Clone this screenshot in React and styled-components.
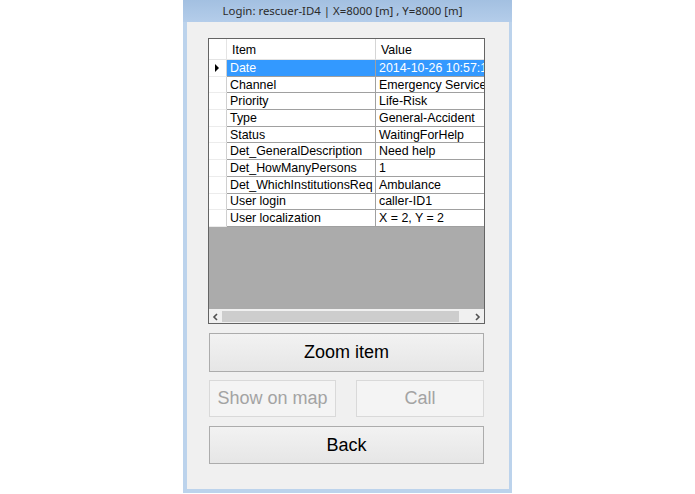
import React from 'react';
import styled, { createGlobalStyle } from 'styled-components';

const GlobalStyle = createGlobalStyle`
  html, body {
    margin: 0;
    padding: 0;
    background: #ffffff;
  }
`;

const rows = [
  ['Date', '2014-10-26 10:57:19'],
  ['Channel', 'Emergency Services'],
  ['Priority', 'Life-Risk'],
  ['Type', 'General-Accident'],
  ['Status', 'WaitingForHelp'],
  ['Det_GeneralDescription', 'Need help'],
  ['Det_HowManyPersons', '1'],
  ['Det_WhichInstitutionsReq', 'Ambulance'],
  ['User login', 'caller-ID1'],
  ['User localization', 'X = 2, Y = 2'],
];

const Page = styled.div`
  width: 695px;
  height: 494px;
  display: flex;
  padding-left: 183px;
  box-sizing: border-box;
`;

const Window = styled.div`
  width: 329px;
  height: 493px;
  display: flex;
  flex-direction: column;
  background: #bcd3ec;
  box-sizing: border-box;
  padding: 0 3px 4px 4px;
`;

const TitleBar = styled.div`
  height: 22px;
  margin: 0 -3px 0 -4px;
  display: flex;
  align-items: center;
  justify-content: center;
  background: linear-gradient(180deg, #a3c0e1 0%, #b4cdea 100%);
  font-family: 'Noto Sans', 'Liberation Sans', sans-serif;
  font-size: 11.4px;
  color: #2b2b2b;
  padding: 0 10px 1px 0;
  box-sizing: border-box;
`;

const Client = styled.div`
  flex: 1;
  background: #f0f0f0;
  display: flex;
  flex-direction: column;
  padding: 16px 0 0 21px;
`;

const Grid = styled.div`
  width: 277px;
  height: 286px;
  box-sizing: border-box;
  border: 1px solid #646464;
  background: #ababab;
  display: flex;
  flex-direction: column;
  overflow: hidden;
  font-family: 'Liberation Sans', Arial, sans-serif;
  font-size: 12.4px;
  color: #000;
`;

const Row = styled.div`
  display: grid;
  grid-template-columns: 18px 149px 120px;
  height: ${({ $h }) => $h}px;
  flex-shrink: 0;
`;

const HeaderCell = styled.div`
  background: #ffffff;
  border-right: 1px solid ${({ $corner }) => ($corner ? '#e4e4e4' : '#d5d5d5')};
  border-bottom: 1px solid #e4e4e4;
  display: flex;
  align-items: center;
  padding: 1px 0 0 5px;
  white-space: nowrap;
  overflow: hidden;
`;

const RowHeader = styled.div`
  background: #ffffff;
  border-right: 1px solid #d0d0d0;
  border-bottom: 1px solid #ececec;
  display: flex;
  align-items: center;
  justify-content: center;
  box-sizing: border-box;
`;

const Cell = styled.div`
  background: ${({ $selected }) => ($selected ? '#3399ff' : '#ffffff')};
  color: ${({ $selected }) => ($selected ? '#ffffff' : '#000000')};
  border-right: 1px solid #a0a0a0;
  border-bottom: 1px solid #a0a0a0;
  display: flex;
  align-items: center;
  padding-left: 3px;
  white-space: nowrap;
  overflow: hidden;
  box-sizing: border-box;
`;

const Empty = styled.div`
  flex: 1;
`;

const HScroll = styled.div`
  height: 13px;
  flex-shrink: 0;
  background: #f0f0f0;
  display: flex;
  align-items: stretch;
  border-top: 1px solid #f0f0f0;
`;

const ScrollArrow = styled.div`
  width: 13px;
  display: flex;
  align-items: center;
  justify-content: center;
`;

const ScrollThumb = styled.div`
  width: 237px;
  background: #cdcdcd;
  margin: 1px 0;
`;

const ScrollTrack = styled.div`
  flex: 1;
`;

const Button = styled.button`
  height: ${({ $h }) => $h}px;
  width: ${({ $w }) => $w}px;
  box-sizing: border-box;
  border: 1px solid ${({ disabled }) => (disabled ? '#d9d9d9' : '#acacac')};
  background: ${({ disabled }) =>
    disabled ? '#f4f4f4' : 'linear-gradient(180deg, #f2f2f2 0%, #e6e6e6 100%)'};
  color: ${({ disabled }) => (disabled ? '#a3a3a3' : '#000000')};
  font-family: 'Liberation Sans', Arial, sans-serif;
  font-size: 18px;
  padding: 0;
  margin: 0;
  border-radius: 0;
`;

const ButtonRow = styled.div`
  display: flex;
  gap: 20px;
`;

const Stack = styled.div`
  display: flex;
  flex-direction: column;
  margin-left: 1px;
  margin-top: ${({ $mt }) => $mt}px;
`;

const Arrow = ({ dir }) => (
  <svg width="7" height="8" viewBox="0 0 7 8">
    <path
      d={dir === 'left' ? 'M5 1 L2 4 L5 7' : 'M2 1 L5 4 L2 7'}
      stroke="#505050"
      strokeWidth="1.6"
      fill="none"
    />
  </svg>
);

export default function App() {
  return (
    <>
      <GlobalStyle />
      <Page>
        <Window>
          <TitleBar>Login: rescuer-ID4 | X=8000 [m] , Y=8000 [m]</TitleBar>
          <Client>
            <Grid>
              <Row $h={21}>
                <HeaderCell $corner />
                <HeaderCell>Item</HeaderCell>
                <HeaderCell>Value</HeaderCell>
              </Row>
              {rows.map(([item, value], i) => (
                <Row key={item} $h={16.7}>
                  <RowHeader>
                    {i === 0 && (
                      <svg width="5" height="8" viewBox="0 0 5 8">
                        <path d="M0 0 L4 4 L0 8 Z" fill="#000" />
                      </svg>
                    )}
                  </RowHeader>
                  <Cell $selected={i === 0}>{item}</Cell>
                  <Cell $selected={i === 0}>{value}</Cell>
                </Row>
              ))}
              <Empty />
              <HScroll>
                <ScrollArrow>
                  <Arrow dir="left" />
                </ScrollArrow>
                <ScrollThumb />
                <ScrollTrack />
                <ScrollArrow>
                  <Arrow dir="right" />
                </ScrollArrow>
              </HScroll>
            </Grid>
            <Stack $mt={9}>
              <Button $w={275} $h={39}>Zoom item</Button>
            </Stack>
            <Stack $mt={8}>
              <ButtonRow>
                <Button $w={127} $h={37} disabled>Show on map</Button>
                <Button $w={128} $h={37} disabled>Call</Button>
              </ButtonRow>
            </Stack>
            <Stack $mt={9}>
              <Button $w={275} $h={38}>Back</Button>
            </Stack>
          </Client>
        </Window>
      </Page>
    </>
  );
}
